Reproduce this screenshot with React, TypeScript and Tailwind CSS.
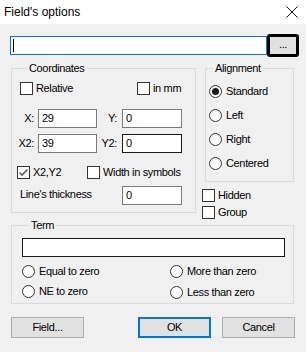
import React from "react";

const font = { fontFamily: '"Liberation Sans", Arial, sans-serif' };

function Check({ checked = false, label }: { checked?: boolean; label: string }) {
  return (
    <div className="flex items-center gap-[3px] h-[13px]">
      <div className="w-[13px] h-[13px] border border-[#333] bg-white flex items-center justify-center shrink-0">
        {checked && (
          <svg width="11" height="11" viewBox="0 0 11 11">
            <path d="M1.5 5.5 L4 8 L9.5 2.5" fill="none" stroke="#5c5c5c" strokeWidth="1.6" />
          </svg>
        )}
      </div>
      <span className="leading-[13px]">{label}</span>
    </div>
  );
}

function Radio({ checked = false, label }: { checked?: boolean; label: string }) {
  return (
    <div className="flex items-center gap-[4px] h-[13px]">
      <div className="w-[13px] h-[13px] rounded-full border border-[#333] bg-white flex items-center justify-center shrink-0">
        {checked && <div className="w-[7px] h-[7px] rounded-full bg-[#1a1a1a]" />}
      </div>
      <span className="leading-[13px]">{label}</span>
    </div>
  );
}

function Field({ value, w, dark = false }: { value: string; w: string; dark?: boolean }) {
  return (
    <div
      className={`${w} h-[19px] bg-white border ${
        dark ? "border-[#1a1a1a]" : "border-[#7a7a7a]"
      } flex items-center pl-[3px] leading-none`}
    >
      {value}
    </div>
  );
}

function Btn({ label, primary = false }: { label: string; primary?: boolean }) {
  return (
    <div
      className={`w-[73px] h-[21px] bg-[#e1e1e1] flex items-center justify-center ${
        primary ? "border-2 border-[#0078d7]" : "border border-[#adadad]"
      }`}
    >
      {label}
    </div>
  );
}

export default function App() {
  return (
    <div
      className="w-[306px] h-[352px] bg-[#f0f0f0] text-[11px] tracking-[-0.35px] text-black overflow-hidden leading-[13px]"
      style={font}
    >
      {/* Title bar */}
      <div className="h-[24px] bg-white flex items-center justify-between pl-[4px] pr-[8px]">
        <span className="text-[12px] tracking-normal">Field's options</span>
        <svg width="12" height="12" viewBox="0 0 12 12">
          <path d="M0.5 0.5 L11.5 11.5 M11.5 0.5 L0.5 11.5" stroke="#111" strokeWidth="1" />
        </svg>
      </div>

      {/* Name row */}
      <div className="mt-[10px] flex items-center pl-[10px]">
        <div className="w-[257px] h-[19px] bg-white border border-[#0078d7] flex items-center pl-[2px]">
          <div className="w-[1px] h-[13px] bg-black" />
        </div>
        <div className="w-[32px] h-[23px] border-[3px] border-black rounded-[3px] bg-[#e1e1e1] flex items-center justify-center leading-none pb-[3px]">
          ...
        </div>
      </div>

      {/* Coordinates + Alignment */}
      <div className="mt-[5px] flex items-start pl-[11px]">
        <fieldset className="w-[185px] h-[151px] border border-[#dcdcdc] pl-[8px] pt-[7px]">
          <legend className="ml-[7px] px-[2px] leading-[13px]">Coordinates</legend>
          <div className="flex">
            <div className="w-[117px]">
              <Check label="Relative" />
            </div>
            <Check label="in mm" />
          </div>
          <div className="mt-[14px] flex items-center -ml-[8px]">
            <span className="w-[23px] text-right pr-[1px]">X:</span>
            <div className="ml-[3px]">
              <Field value="29" w="w-[59px]" />
            </div>
            <span className="w-[21px] text-right pr-[1px]">Y:</span>
            <div className="ml-[4px]">
              <Field value="0" w="w-[60px]" />
            </div>
          </div>
          <div className="mt-[6px] flex items-center -ml-[8px]">
            <span className="w-[23px] text-right pr-[1px]">X2:</span>
            <div className="ml-[3px]">
              <Field value="39" w="w-[59px]" />
            </div>
            <span className="w-[21px] text-right pr-[1px]">Y2:</span>
            <div className="ml-[4px]">
              <Field value="0" w="w-[60px]" dark />
            </div>
          </div>
          <div className="mt-[13px] flex -ml-[3px]">
            <div className="w-[70px]">
              <Check checked label="X2,Y2" />
            </div>
            <Check label="Width in symbols" />
          </div>
          <div className="mt-[7px] flex items-start">
            <span className="w-[102px] pt-[2px]">Line's thickness</span>
            <Field value="0" w="w-[60px]" />
          </div>
        </fieldset>

        <div className="ml-[6px] flex flex-col">
          <fieldset className="ml-[3px] w-[89px] h-[120px] border border-[#dcdcdc] pl-[3px] pt-[10px]">
            <legend className="ml-[4px] px-[2px] leading-[13px]">Alignment</legend>
            <div className="flex flex-col gap-[11px]">
              <Radio checked label="Standard" />
              <Radio label="Left" />
              <Radio label="Right" />
              <Radio label="Centered" />
            </div>
          </fieldset>
          <div className="mt-[7px] flex flex-col gap-[4px]">
            <Check label="Hidden" />
            <Check label="Group" />
          </div>
        </div>
      </div>

      {/* Term */}
      <div className="pl-[11px]">
        <fieldset className="w-[283px] h-[85px] border border-[#dcdcdc] pl-[10px] pt-[6px]">
          <legend className="ml-[7px] px-[2px] leading-[13px]">Term</legend>
          <div className="w-[263px] h-[19px] bg-white border border-[#1a1a1a]" />
          <div className="mt-[8px] grid grid-cols-[148px_1fr] gap-y-[7px]">
            <Radio label="Equal to zero" />
            <Radio label="More than zero" />
            <Radio label="NE to zero" />
            <div className="mt-[1px]">
              <Radio label="Less than zero" />
            </div>
          </div>
        </fieldset>
      </div>

      {/* Buttons */}
      <div className="mt-[13px] flex pl-[11px]">
        <Btn label="Field..." />
        <div className="ml-[54px]">
          <Btn label="OK" primary />
        </div>
        <div className="ml-[11px]">
          <Btn label="Cancel" />
        </div>
      </div>
    </div>
  );
}
